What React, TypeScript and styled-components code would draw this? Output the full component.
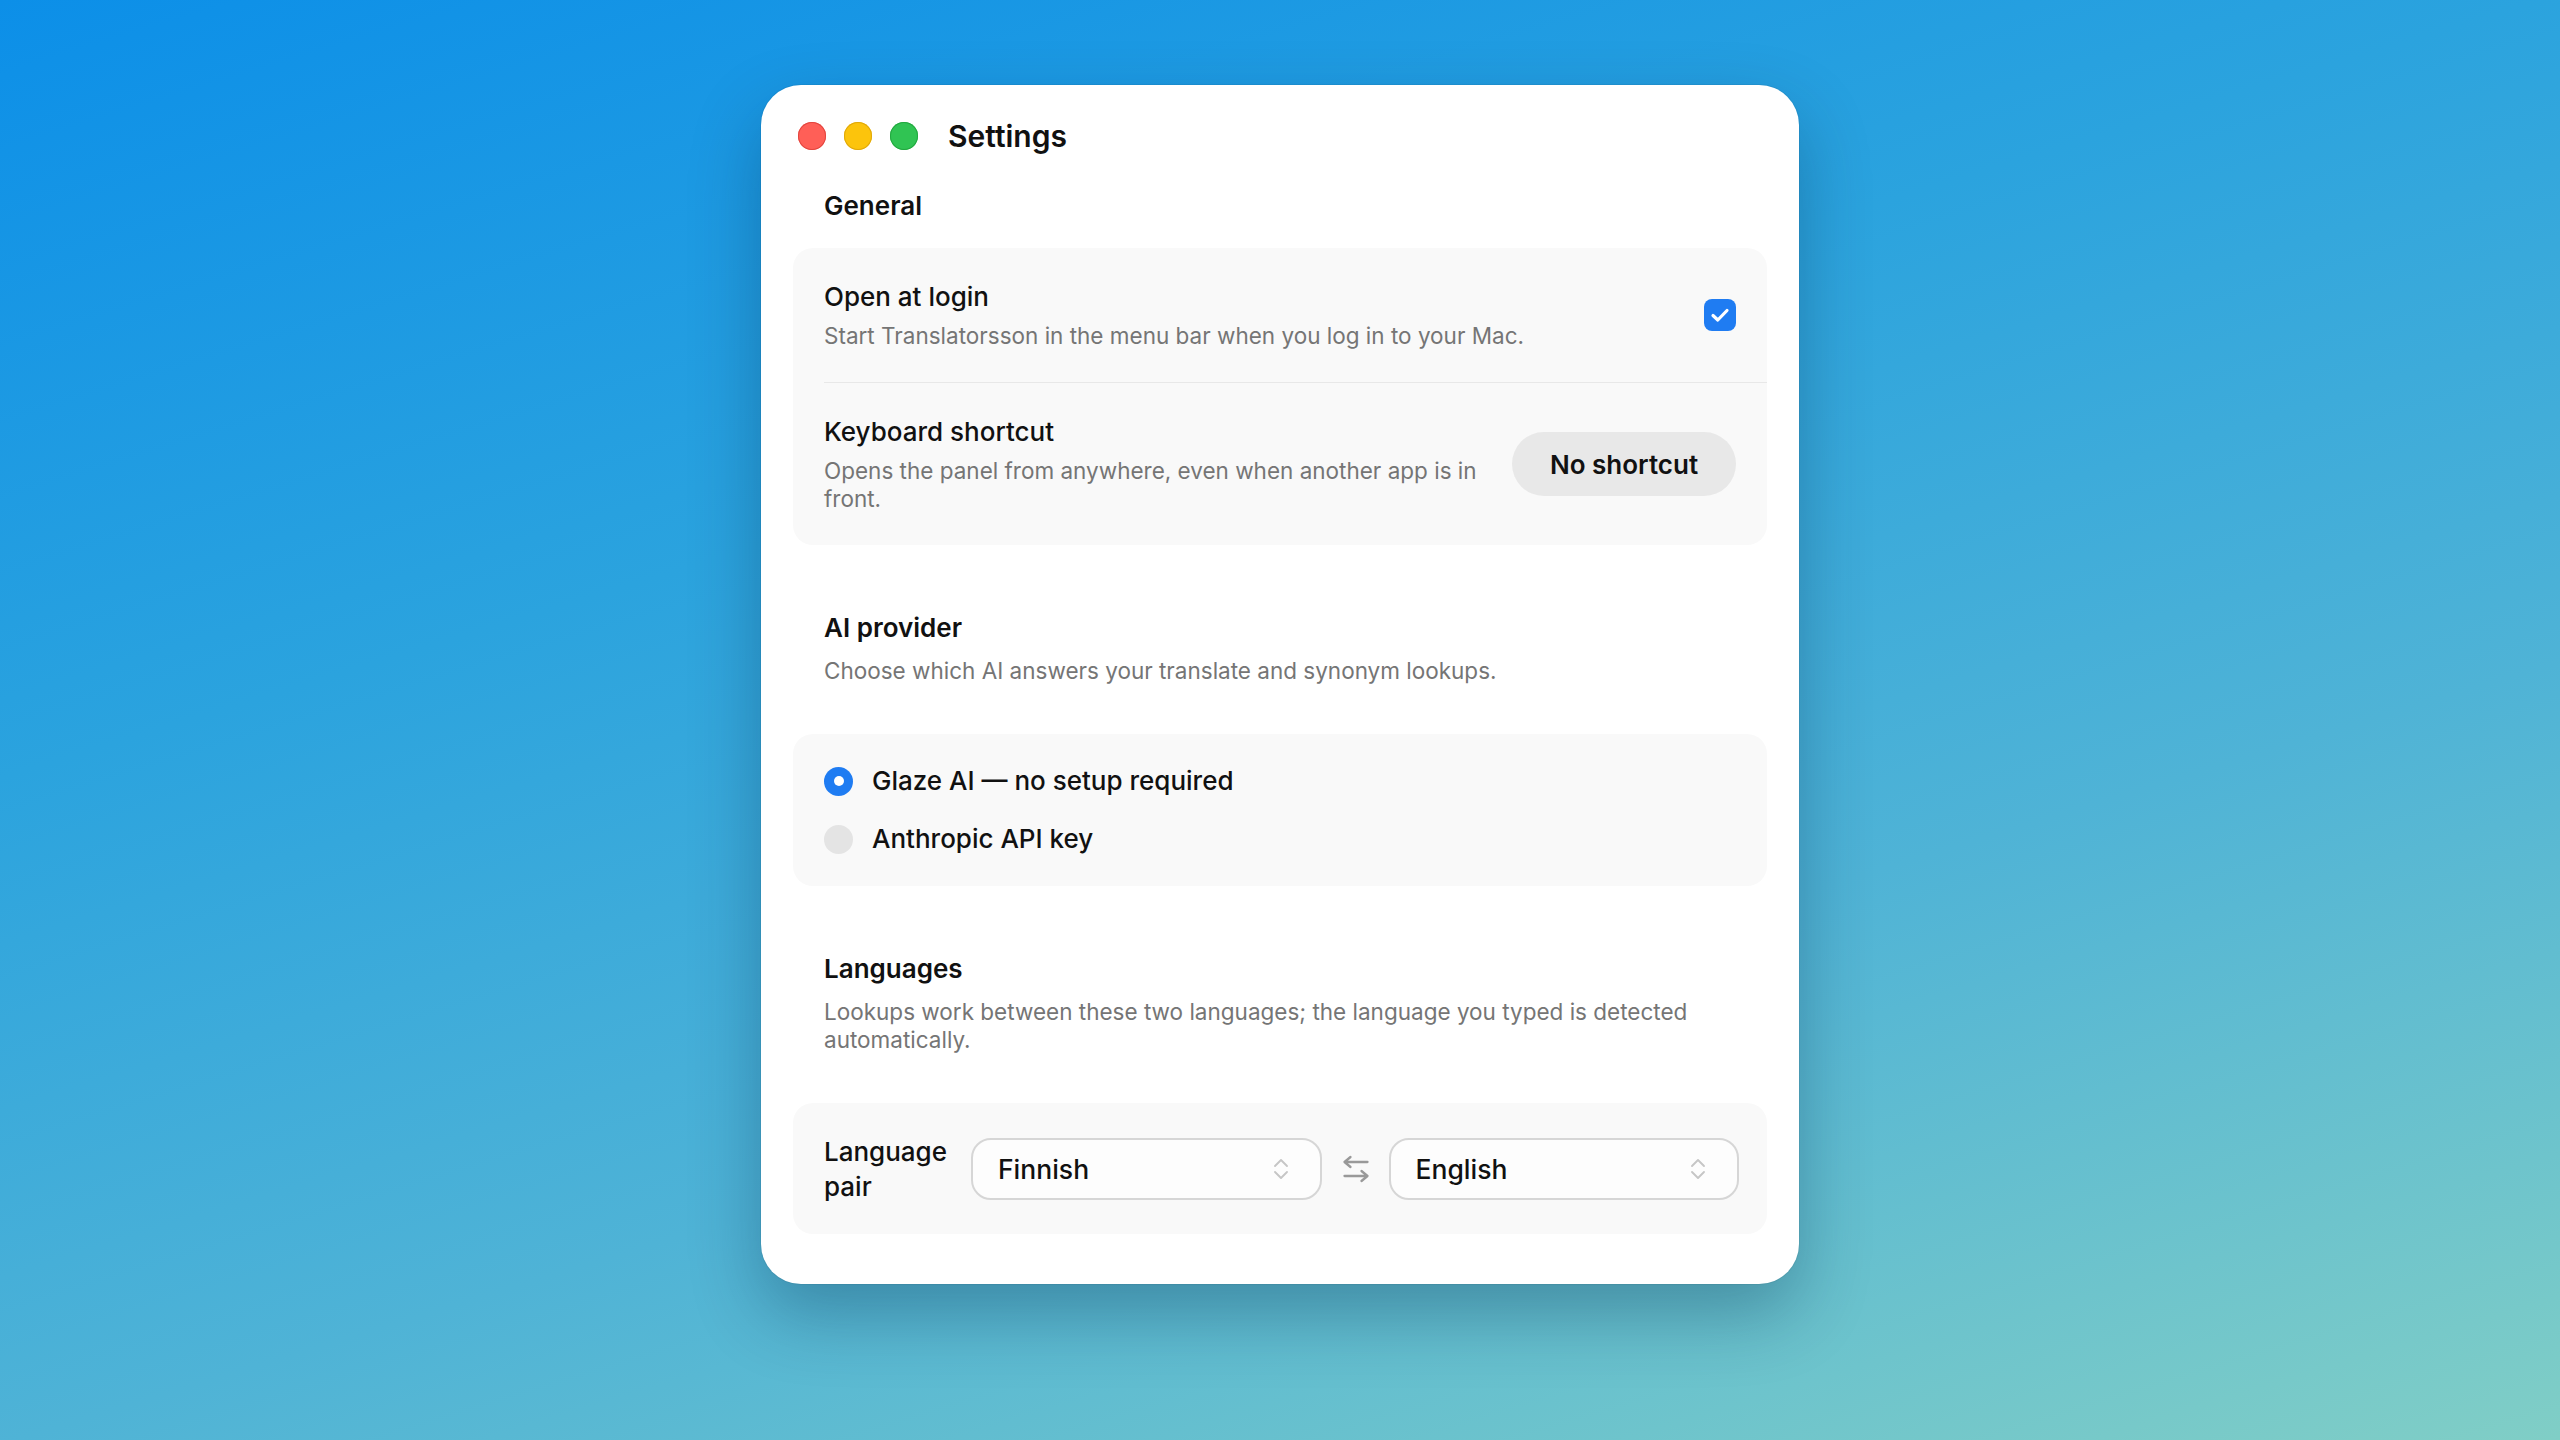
import React from "react";
import styled, { createGlobalStyle } from "styled-components";

// ========================================================================================= //
// [ GLOBAL ] ============================================================================== //
// ========================================================================================= //

const GlobalStyle = createGlobalStyle`
  html, body {
    margin: 0;
    padding: 0;
  }
  body {
    font-family: Inter, "Noto Sans", sans-serif;
    color: #141414;
    -webkit-font-smoothing: antialiased;
  }
  * {
    box-sizing: border-box;
  }
`;

// ========================================================================================= //
// [ STYLED COMPONENTS ] =================================================================== //
// ========================================================================================= //

const Page = styled.main`
  min-height: 100vh;
  display: flex;
  justify-content: center;
  align-items: flex-start;
  padding-top: 85px;
  background: linear-gradient(163deg, #0c8fe8 0%, #2ba3de 35%, #4fb3d6 65%, #80cec6 100%);
`;

const Window = styled.div`
  width: 1038px;
  display: flex;
  flex-direction: column;
  padding: 33px 32px 50px;
  background: #ffffff;
  border-radius: 40px;
  box-shadow: 0 30px 70px rgba(0, 40, 70, 0.32), 0 0 0 1px rgba(0, 0, 0, 0.05);
`;

const TitleBar = styled.header`
  display: flex;
  align-items: center;
  height: 36px;
  padding-left: 5px;
`;

const Lights = styled.div`
  display: flex;
  gap: 18px;
  margin-right: 30px;
`;

const Light = styled.span<{ $color: string; $edge: string }>`
  width: 28px;
  height: 28px;
  border-radius: 50%;
  background: ${(p) => p.$color};
  box-shadow: inset 0 0 0 1px ${(p) => p.$edge};
`;

const WindowTitle = styled.h1`
  margin: 0;
  font-size: 30px;
  font-weight: 600;
  line-height: 36px;
  color: #111111;
`;

const Section = styled.section<{ $first?: boolean }>`
  margin-top: ${(p) => (p.$first ? 35 : 66)}px;
`;

const SectionHeader = styled.div<{ $hasDesc: boolean }>`
  padding: 0 31px;
  margin-bottom: ${(p) => (p.$hasDesc ? 49 : 25)}px;
`;

const SectionTitle = styled.h2`
  margin: 0;
  font-size: 26px;
  font-weight: 600;
  line-height: 34px;
  color: #111111;
`;

const Description = styled.p<{ $top?: number }>`
  margin: ${(p) => p.$top ?? 0}px 0 0;
  font-size: 22.5px;
  font-weight: 400;
  line-height: 28px;
  color: #757575;
`;

const Card = styled.div`
  background: #f9f9f9;
  border-radius: 20px;
`;

const Row = styled.div`
  display: flex;
  align-items: center;
  gap: 24px;
  padding: 32px 31px;
`;

const Divider = styled.div`
  height: 1px;
  margin-left: 31px;
  background: #e8e8e8;
`;

const RowText = styled.div`
  flex: 1;
  min-width: 0;
  display: flex;
  flex-direction: column;
`;

const RowTitle = styled.div`
  font-size: 26px;
  font-weight: 500;
  line-height: 34px;
  color: #111111;
`;

const Checkbox = styled.span`
  flex-shrink: 0;
  width: 32px;
  height: 32px;
  display: grid;
  place-items: center;
  border-radius: 8px;
  background: #1f7cf2;
`;

const ShortcutButton = styled.button`
  flex-shrink: 0;
  width: 224px;
  height: 64px;
  padding: 0;
  border: none;
  border-radius: 32px;
  background: #e8e8e8;
  font-family: inherit;
  font-size: 26px;
  font-weight: 600;
  color: #111111;
`;

const RadioList = styled.div`
  display: flex;
  flex-direction: column;
  gap: 24px;
  padding: 30px 31px;
`;

const RadioOption = styled.label`
  display: flex;
  align-items: center;
  gap: 19px;
  font-size: 26px;
  font-weight: 500;
  line-height: 34px;
  color: #111111;
`;

const RadioDot = styled.span<{ $checked: boolean }>`
  width: 29px;
  height: 29px;
  display: grid;
  place-items: center;
  border-radius: 50%;
  background: ${(p) => (p.$checked ? "#1f7cf2" : "#e4e4e4")};

  &::after {
    content: "";
    width: 10px;
    height: 10px;
    border-radius: 50%;
    background: #ffffff;
    display: ${(p) => (p.$checked ? "block" : "none")};
  }
`;

const PairRow = styled.div`
  display: flex;
  align-items: center;
  padding: 31px 28px 30px 31px;
`;

const PairLabel = styled.div`
  width: 124px;
  margin-right: 23px;
  font-size: 26px;
  font-weight: 500;
  line-height: 35px;
  color: #111111;
`;

const Select = styled.div`
  flex: 1;
  height: 62px;
  display: flex;
  align-items: center;
  justify-content: space-between;
  padding: 0 31px 0 25px;
  border: 2px solid #d6d6d6;
  border-radius: 20px;
  background: #fdfdfd;
  font-size: 26.5px;
  font-weight: 500;
  color: #111111;
`;

const SwapIcon = styled.span`
  display: flex;
  margin: 0 19px 0 20px;
  color: #999999;
`;

// ========================================================================================= //
// [ ICONS ] =============================================================================== //
// ========================================================================================= //

const CheckIcon = () => (
  <svg width="32" height="32" viewBox="0 0 32 32" fill="none">
    <path
      d="M9 16.5 L13.8 21 L23 11.5"
      stroke="#ffffff"
      strokeWidth="3.2"
      strokeLinecap="round"
      strokeLinejoin="round"
    />
  </svg>
);

const UpDownIcon = () => (
  <svg width="16" height="26" viewBox="0 0 16 26" fill="none">
    <path
      d="M2 10 L8 4 L14 10 M2 16 L8 22 L14 16"
      stroke="#c6c6c6"
      strokeWidth="1.9"
      strokeLinecap="round"
      strokeLinejoin="round"
    />
  </svg>
);

const SwapArrows = () => (
  <svg width="28" height="28" viewBox="0 0 28 28" fill="none">
    <path
      d="M2.5 7 H25.5 M8.5 2 L2.5 7 L8.5 12 M2.5 21 H25.5 M19.5 16 L25.5 21 L19.5 26"
      stroke="currentColor"
      strokeWidth="2.3"
      strokeLinecap="round"
      strokeLinejoin="round"
    />
  </svg>
);

// ========================================================================================= //
// [ EXPORTED COMPONENT ] ================================================================== //
// ========================================================================================= //

const providers = [
  { id: "glaze", label: "Glaze AI — no setup required", checked: true },
  { id: "anthropic", label: "Anthropic API key", checked: false },
];

export default function App() {
  return (
    <>
      <GlobalStyle />
      <Page>
        <Window>
          <TitleBar>
            <Lights>
              <Light $color="#ff5f57" $edge="#e2463f" />
              <Light $color="#fcc40c" $edge="#e0a80a" />
              <Light $color="#30c453" $edge="#22a83f" />
            </Lights>
            <WindowTitle>Settings</WindowTitle>
          </TitleBar>

          <Section $first>
            <SectionHeader $hasDesc={false}>
              <SectionTitle>General</SectionTitle>
            </SectionHeader>
            <Card>
              <Row>
                <RowText>
                  <RowTitle>Open at login</RowTitle>
                  <Description $top={8}>
                    Start Translatorsson in the menu bar when you log in to your Mac.
                  </Description>
                </RowText>
                <Checkbox>
                  <CheckIcon />
                </Checkbox>
              </Row>
              <Divider />
              <Row>
                <RowText>
                  <RowTitle>Keyboard shortcut</RowTitle>
                  <Description $top={8}>
                    Opens the panel from anywhere, even when another app is in front.
                  </Description>
                </RowText>
                <ShortcutButton>No shortcut</ShortcutButton>
              </Row>
            </Card>
          </Section>

          <Section>
            <SectionHeader $hasDesc>
              <SectionTitle>AI provider</SectionTitle>
              <Description $top={12}>
                Choose which AI answers your translate and synonym lookups.
              </Description>
            </SectionHeader>
            <Card>
              <RadioList>
                {providers.map((p) => (
                  <RadioOption key={p.id}>
                    <RadioDot $checked={p.checked} />
                    {p.label}
                  </RadioOption>
                ))}
              </RadioList>
            </Card>
          </Section>

          <Section>
            <SectionHeader $hasDesc>
              <SectionTitle>Languages</SectionTitle>
              <Description $top={12}>
                Lookups work between these two languages; the language you typed is detected
                automatically.
              </Description>
            </SectionHeader>
            <Card>
              <PairRow>
                <PairLabel>Language pair</PairLabel>
                <Select>
                  Finnish
                  <UpDownIcon />
                </Select>
                <SwapIcon>
                  <SwapArrows />
                </SwapIcon>
                <Select>
                  English
                  <UpDownIcon />
                </Select>
              </PairRow>
            </Card>
          </Section>
        </Window>
      </Page>
    </>
  );
}
